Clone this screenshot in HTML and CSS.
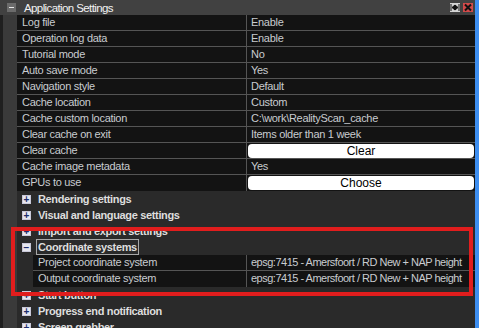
FILE: index.html
```html
<!DOCTYPE html>
<html>
<head>
<meta charset="utf-8">
<link rel="stylesheet" href="styles.css">
</head>
<body>
<div class="window">
  <div class="main">
    <div class="header">
      <span class="hbox"><span class="hminus"></span></span>
      <span class="htitle">Application Settings</span>
      <span class="hicons">
        <span class="ibtn ibtn-dock"><svg width="10" height="9" viewBox="0 0 10 9"><path d="M1 1v7M9 1v7M2 4.5l3-2.5v5zM8 4.5l-3-2.5v5z" fill="#111" stroke="#111" stroke-width="1"/></svg></span>
        <span class="ibtn ibtn-close"><svg width="10" height="9" viewBox="0 0 10 9"><path d="M2 1.5l6 6M8 1.5l-6 6" stroke="#111" stroke-width="2"/></svg></span>
      </span>
    </div>
    <div class="body">
      <div class="gutter"></div>
      <div class="content">
        <div class="table">
          <div class="row"><div class="k">Log file</div><div class="v">Enable</div></div>
          <div class="row"><div class="k">Operation log data</div><div class="v">Enable</div></div>
          <div class="row"><div class="k">Tutorial mode</div><div class="v">No</div></div>
          <div class="row"><div class="k">Auto save mode</div><div class="v">Yes</div></div>
          <div class="row"><div class="k">Navigation style</div><div class="v">Default</div></div>
          <div class="row"><div class="k">Cache location</div><div class="v">Custom</div></div>
          <div class="row"><div class="k">Cache custom location</div><div class="v">C:\work\RealityScan_cache</div></div>
          <div class="row"><div class="k">Clear cache on exit</div><div class="v">Items older than 1 week</div></div>
          <div class="row"><div class="k">Clear cache</div><div class="v vb"><span class="btn">Clear</span></div></div>
          <div class="row"><div class="k">Cache image metadata</div><div class="v">Yes</div></div>
          <div class="row last"><div class="k">GPUs to use</div><div class="v vb"><span class="btn">Choose</span></div></div>
        </div>
        <div class="section"><span class="tog">+</span><span class="stitle">Rendering settings</span></div>
        <div class="section"><span class="tog">+</span><span class="stitle">Visual and language settings</span></div>
        <div class="section"><span class="tog">+</span><span class="stitle">Import and export settings</span></div>
        <div class="section"><span class="tog minus">&#8722;</span><span class="stitle focus">Coordinate systems</span></div>
        <div class="subtable">
          <div class="row"><div class="k sk">Project coordinate system</div><div class="v vn">epsg:7415 - Amersfoort / RD New + NAP height</div></div>
          <div class="row last"><div class="k sk">Output coordinate system</div><div class="v vn">epsg:7415 - Amersfoort / RD New + NAP height</div></div>
        </div>
        <div class="section"><span class="tog">+</span><span class="stitle">Start button</span></div>
        <div class="section"><span class="tog">+</span><span class="stitle">Progress end notification</span></div>
        <div class="section"><span class="tog">+</span><span class="stitle">Screen grabber</span></div>
      </div>
    </div>
  </div>
  <div class="scroll"></div>
  <div class="annot"></div>
</div>
</body>
</html>
```
FILE: styles.css
```css
html, body {
  margin: 0;
  padding: 0;
  background: #2a2a2a;
  overflow: hidden;
}
.window {
  position: relative;
  display: flex;
  width: 479px;
  height: 328px;
  overflow: hidden;
  font-family: "Liberation Sans", Arial, sans-serif;
  font-size: 11px;
  letter-spacing: -0.3px;
  color: #c9ccd0;
}
.main {
  flex: 1;
  display: flex;
  flex-direction: column;
  min-width: 0;
}
.scroll {
  width: 4px;
  flex-shrink: 0;
  background: #3d8ef0;
}
.header {
  height: 15px;
  background: #414141;
  display: flex;
  align-items: center;
}
.hbox {
  width: 9px;
  height: 9px;
  margin-left: 7px;
  background: #6b6b6b;
  display: flex;
  align-items: center;
  justify-content: center;
}
.hminus {
  width: 5px;
  height: 1px;
  background: #e8e8e8;
}
.htitle {
  margin-left: 8px;
  font-size: 11.5px;
  letter-spacing: -0.6px;
  color: #f2f2f2;
  flex: 1;
}
.hicons {
  display: flex;
  gap: 3px;
  margin-right: 2px;
}
.ibtn {
  width: 10px;
  height: 9px;
  display: flex;
}
.ibtn-dock { background: #d4d4d4; }
.ibtn-close { background: #d24a4a; }
.body {
  flex: 1;
  display: flex;
  min-height: 0;
}
.gutter {
  width: 14px;
  flex-shrink: 0;
  background: #3a3a3a;
  border-left: 3px solid #1f1f1f;
}
.content {
  flex: 1;
  min-width: 0;
}
.row {
  display: flex;
  height: 15px;
  border-bottom: 1px solid #555;
  background: #131313;
  line-height: 15px;
}
.row.last { border-bottom: none; height: 16px; }
.k {
  width: 224px;
  flex-shrink: 0;
  padding-left: 5px;
  border-right: 1px solid #555;
  white-space: nowrap;
}
.sk {
  width: 208px;
}
.v {
  flex: 1;
  min-width: 0;
  padding-left: 4px;
  white-space: nowrap;
}
.vn {
  letter-spacing: -0.5px;
}
.vb {
  padding: 1px 1px 0 1px;
}
.btn {
  display: block;
  height: 14px;
  line-height: 14px;
  background: #fff;
  border-radius: 4px;
  color: #000;
  text-align: center;
  font-size: 12px;
  letter-spacing: 0;
}
.section {
  height: 16px;
  display: flex;
  align-items: center;
  padding-left: 5px;
}
.tog {
  width: 7px;
  height: 7px;
  flex-shrink: 0;
  border: 1px solid #c8c8d8;
  background: #e6e6ee;
  color: #1c2c6c;
  font-weight: bold;
  font-size: 10px;
  letter-spacing: 0;
  line-height: 7px;
  display: flex;
  align-items: center;
  justify-content: center;
}
.stitle {
  margin-left: 5px;
  font-weight: bold;
  font-size: 11px;
  letter-spacing: -0.35px;
  color: #dedede;
  white-space: nowrap;
  padding: 1px 1px;
  border: 1px solid transparent;
}
.stitle.focus {
  border-color: #a8a8a8;
}
.subtable {
  margin-left: 16px;
}
.annot {
  position: absolute;
  left: 11px;
  top: 227px;
  width: 454px;
  height: 61px;
  border: 4px solid #e11d1d;
}
```
